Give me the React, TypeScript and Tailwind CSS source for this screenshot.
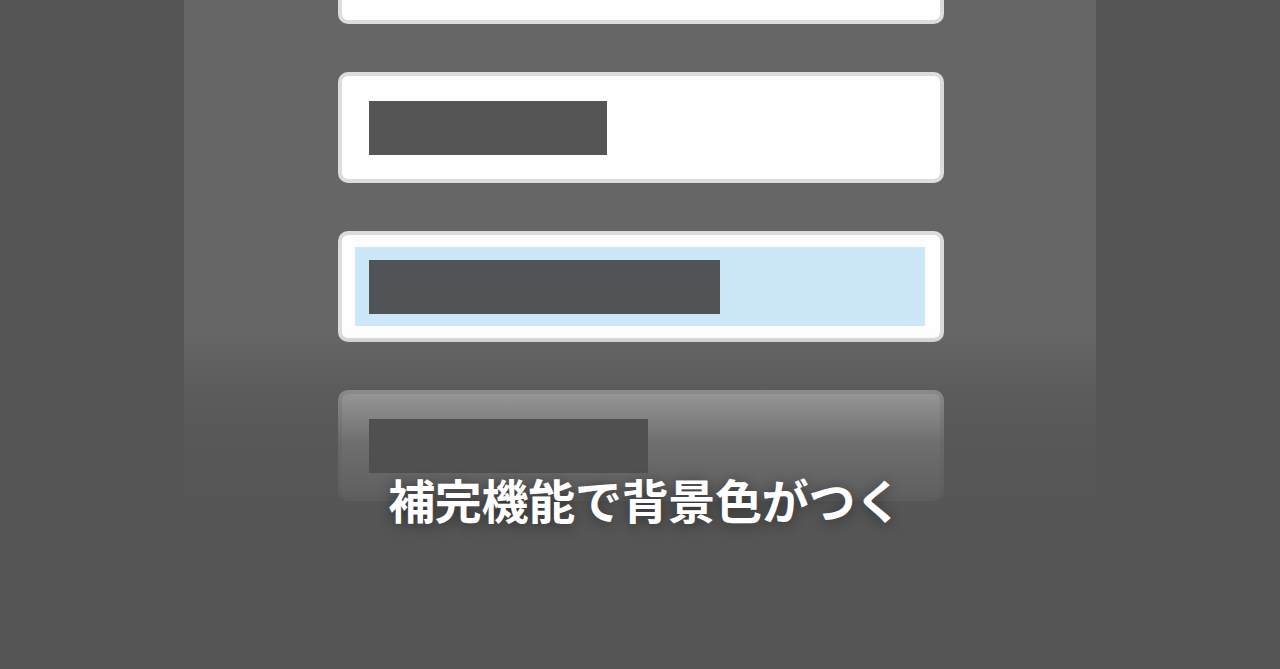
import React from 'react';

type Row = { bar: number; active?: boolean };

const rows: Row[] = [
  { bar: 238 },
  { bar: 238 },
  { bar: 351, active: true },
  { bar: 279 },
];

const InputRow: React.FC<{ row: Row; last?: boolean }> = ({ row, last }) => (
  <div className="w-[606px] h-[111px] shrink-0 rounded-[10px] border-4 border-[#dcdcdc] bg-[#fefefe] py-[12px] pl-[13px] pr-[15px]">
    <div className={`h-full w-full pl-[14px] pt-[13px] ${row.active ? 'bg-[#cbe7f8]' : ''}`}>
      <div
        className={`relative z-10 h-[54px] ${row.active ? 'bg-[#505457]' : last ? 'bg-[#505050]' : 'bg-[#555555]'}`}
        style={{ width: row.bar }}
      />
    </div>
  </div>
);

export default function App() {
  return (
    <div className="w-full h-[669px] bg-[#555555] flex justify-center overflow-hidden">
      <div className="relative w-[912px] h-full bg-[#666666] overflow-hidden">
        <div className="flex flex-col items-center gap-[48px] mt-[-87px] pl-[2px]">
          {rows.map((row, i) => (
            <InputRow key={i} row={row} last={i === rows.length - 1} />
          ))}
        </div>

        {/* fade the lower part of the list into the page */}
        <div className="absolute left-0 right-0 top-[335px] h-[175px] bg-[linear-gradient(to_bottom,rgba(85,85,85,0)_0%,rgba(85,85,85,0.6)_31%,rgba(85,85,85,0.85)_62%,rgba(85,85,85,0.96)_100%)]" />
        <div className="absolute left-0 right-0 top-[510px] bottom-0 bg-[#555555]" />

        <p
          className="absolute left-0 right-0 top-[469px] z-20 pl-[10px] text-center text-white font-bold text-[47px] leading-[60px] tracking-[-0.3px] [text-shadow:0_2px_14px_rgba(0,0,0,0.45)]"
          style={{ fontFamily: '"Noto Sans CJK JP", "Noto Sans", sans-serif' }}
        >
          補完機能で背景色がつく
        </p>
      </div>
    </div>
  );
}
